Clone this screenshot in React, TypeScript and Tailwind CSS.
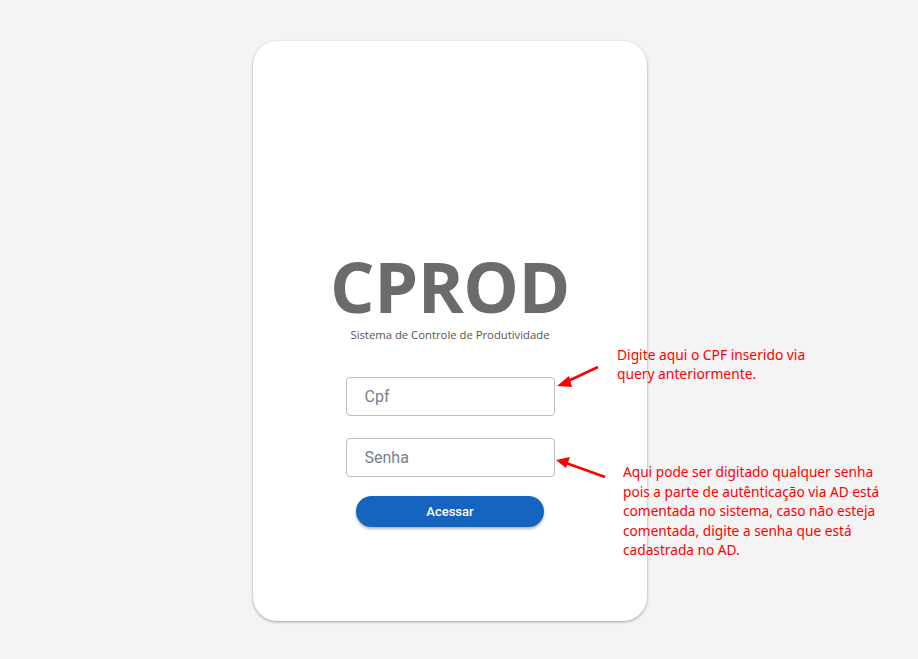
import React from "react";

export default function App() {
  return (
    <div className="relative min-h-[659px] w-full bg-[#f4f4f4]" style={{ fontFamily: "'Open Sans', sans-serif" }}>
      <div className="flex pl-[253px] pt-[41px]">
        <div className="flex h-[580px] w-[394px] flex-col items-center rounded-[24px] bg-white pt-[205px] shadow-[0_1px_3px_rgba(0,0,0,0.35)]">
          <h1 className="text-[70px] font-bold leading-[80px] tracking-[-0.5px] text-[#6b6b6b]" style={{ fontFamily: "'Open Sans', sans-serif" }}>
            CPROD
          </h1>
          <p className="mt-[1px] text-[11.3px] leading-[15px] text-[#555]">Sistema de Controle de Produtividade</p>
          <div className="mt-[35px] flex flex-col gap-[22px]" style={{ fontFamily: "Roboto, sans-serif" }}>
            <input
              placeholder="Cpf"
              className="h-[39px] w-[209px] rounded-[4px] border border-[#bdbdbd] bg-white px-[18px] text-[16px] text-[#333] outline-none placeholder:text-[#76808a]"
            />
            <input
              placeholder="Senha"
              className="h-[39px] w-[209px] rounded-[4px] border border-[#bdbdbd] bg-white px-[18px] text-[16px] text-[#333] outline-none placeholder:text-[#76808a]"
            />
          </div>
          <button
            className="mt-[19px] h-[31px] w-[188px] rounded-full bg-[#1565c0] text-[13px] font-medium text-white shadow-[0_2px_3px_rgba(0,0,0,0.3)]"
            style={{ fontFamily: "Roboto, sans-serif" }}
          >
            Acessar
          </button>
        </div>
      </div>

      <div className="absolute left-[617px] top-[345px] text-[13.8px] leading-[19px] text-[#ff0000]" style={{ fontFamily: "'Noto Sans', sans-serif" }}>
        <p>Digite aqui o CPF inserido via</p>
        <p>query anteriormente.</p>
      </div>
      <div className="absolute left-[623px] top-[462px] w-[290px] text-[13.7px] leading-[19.5px] text-[#ff0000]" style={{ fontFamily: "'Noto Sans', sans-serif" }}>
        <p>Aqui pode ser digitado qualquer senha</p>
        <p>pois a parte de autênticação via AD está</p>
        <p>comentada no sistema, caso não esteja</p>
        <p>comentada, digite a senha que está</p>
        <p>cadastrada no AD.</p>
      </div>

      <svg className="absolute left-0 top-0" width="918" height="659" viewBox="0 0 918 659">
        <line x1="598" y1="367" x2="566" y2="382" stroke="#f00" strokeWidth="2.5" />
        <polygon points="557,386 569,376 572,387" fill="#f00" />
        <line x1="605" y1="477" x2="566" y2="463" stroke="#f00" strokeWidth="2.5" />
        <polygon points="556,460 570,457 566,468" fill="#f00" />
      </svg>
    </div>
  );
}
